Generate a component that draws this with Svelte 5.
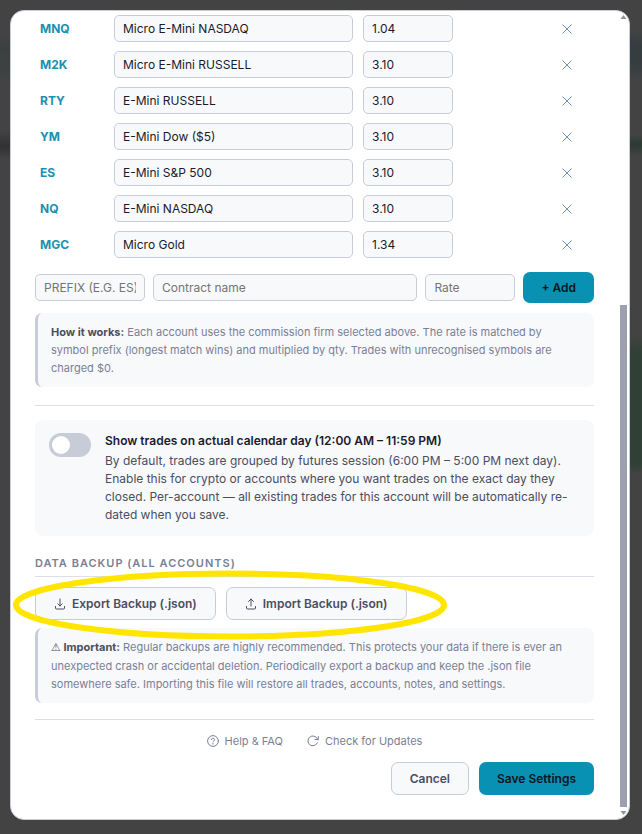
<script lang="ts">
	interface Rate {
		prefix: string;
		name: string;
		rate: string;
	}

	let rates = $state<Rate[]>([
		{ prefix: "MNQ", name: "Micro E-Mini NASDAQ", rate: "1.04" },
		{ prefix: "M2K", name: "Micro E-Mini RUSSELL", rate: "3.10" },
		{ prefix: "RTY", name: "E-Mini RUSSELL", rate: "3.10" },
		{ prefix: "YM", name: "E-Mini Dow ($5)", rate: "3.10" },
		{ prefix: "ES", name: "E-Mini S&P 500", rate: "3.10" },
		{ prefix: "NQ", name: "E-Mini NASDAQ", rate: "3.10" },
		{ prefix: "MGC", name: "Micro Gold", rate: "1.34" },
	]);

	let newPrefix = $state("");
	let newName = $state("");
	let newRate = $state("");
	let calendarDay = $state(false);

	function addRate() {
		const prefix = newPrefix.trim().toUpperCase();
		if (!prefix) return;
		rates.push({ prefix, name: newName, rate: newRate });
		newPrefix = newName = newRate = "";
	}

	function removeRate(index: number) {
		rates.splice(index, 1);
	}
</script>

<div class="overlay">
	<div class="modal" role="dialog" aria-label="Settings">
		<div class="modal-body">
			<table class="rates">
				<colgroup>
					<col class="col-prefix" />
					<col />
					<col class="col-rate" />
					<col class="col-remove" />
				</colgroup>
				<tbody>
					{#each rates as row, i}
						<tr>
							<th scope="row">{row.prefix}</th>
							<td><input class="field" aria-label="{row.prefix} contract name" bind:value={row.name} /></td>
							<td><input class="field rate" aria-label="{row.prefix} rate" bind:value={row.rate} /></td>
							<td class="remove-cell">
								<button class="remove" aria-label="Remove {row.prefix}" onclick={() => removeRate(i)}>
									<svg width="12" height="12" viewBox="0 0 12 12"><path d="M1.5 1.5l9 9M10.5 1.5l-9 9" /></svg>
								</button>
							</td>
						</tr>
					{/each}
				</tbody>
			</table>

			<div class="add-row">
				<input class="field prefix" placeholder="PREFIX (E.G. ES)" aria-label="Prefix" bind:value={newPrefix} />
				<input class="field name" placeholder="Contract name" aria-label="Contract name" bind:value={newName} />
				<input class="field rate" placeholder="Rate" aria-label="Rate" bind:value={newRate} />
				<button class="btn primary add" onclick={addRate}>+ Add</button>
			</div>

			<p class="hint">
				<strong>How it works:</strong> Each account uses the commission firm selected above. The rate is matched by
				symbol prefix (longest match wins) and multiplied by qty. Trades with unrecognised symbols are charged $0.
			</p>

			<hr />

			<div class="toggle-card">
				<input type="checkbox" class="switch" id="calendar-day" bind:checked={calendarDay} />
				<div>
					<label for="calendar-day">Show trades on actual calendar day (12:00 AM – 11:59 PM)</label>
					<p>
						By default, trades are grouped by futures session (6:00 PM – 5:00 PM next day). Enable this for crypto
						or accounts where you want trades on the exact day they closed. Per-account — all existing trades for
						this account will be automatically re-dated when you save.
					</p>
				</div>
			</div>

			<h3>Data Backup (All Accounts)</h3>

			<div class="backup">
				<button class="btn">
					<svg class="icon" width="12" height="12" viewBox="0 0 12 12">
						<path d="M6 1v7M3.8 5.8L6 8l2.200-2.200M1.500 8.500v1.500a1 1 0 0 0 1 1h7a1 1 0 0 0 1-1V8.500" />
					</svg>
					Export Backup (.json)
				</button>
				<button class="btn">
					<svg class="icon" width="12" height="12" viewBox="0 0 12 12">
						<path d="M6 8V1M3.500 3.500L6 1l2.500 2.500M1.500 8.500v1.500a1 1 0 0 0 1 1h7a1 1 0 0 0 1-1V8.500" />
					</svg>
					Import Backup (.json)
				</button>
				<svg class="marker" width="436" height="70" viewBox="0 0 436 70" aria-hidden="true">
					<ellipse cx="218" cy="35" rx="214" ry="31.500" />
				</svg>
			</div>

			<p class="hint important">
				<strong><span class="warn">⚠</span> Important:</strong> Regular backups are highly recommended. This protects
				your data if there is ever an unexpected crash or accidental deletion. Periodically export a backup and keep
				the .json file somewhere safe. Importing this file will restore all trades, accounts, notes, and settings.
			</p>

			<hr />

			<nav class="links">
				<a href="#help">
					<svg class="icon" width="12" height="12" viewBox="0 0 12 12">
						<circle cx="6" cy="6" r="5.400" />
						<path d="M4.500 4.700a1.500 1.500 0 1 1 2.200 1.300c-.5.3-.7.5-.7 1M6 8.400v.6" />
					</svg>
					Help &amp; FAQ
				</a>
				<a href="#updates">
					<svg class="icon" width="12" height="12" viewBox="0 0 12 12">
						<path d="M10.400 7.800A4.900 4.900 0 1 1 10.300 3.800L11.300 4.600M11.300 1.300v3.300H8" />
					</svg>
					Check for Updates
				</a>
			</nav>

			<div class="actions">
				<button class="btn">Cancel</button>
				<button class="btn primary">Save Settings</button>
			</div>
		</div>

		<div class="scrollbar" aria-hidden="true">
			<svg width="7" height="4" viewBox="0 0 7 4"><path d="M3.500 0L6.500 4H.5z" /></svg>
			<div class="track"><div class="thumb"></div></div>
			<svg width="7" height="4" viewBox="0 0 7 4"><path d="M3.500 4L.5 0h6z" /></svg>
		</div>
	</div>
</div>

<style>
	:global(body) {
		margin: 0;
		background: #434343;
	}

	.overlay {
		box-sizing: border-box;
		min-height: 100vh;
		padding: 10px 12px 14px 10px;
		font-family: Inter, sans-serif;
		font-size: 12px;
		background:
			linear-gradient(#434343 30px, #363d40 45px, #363d40 62px, #434343 80px, #434343 135px, #2b3a33 144px, #434343 156px, #434343 335px, #314036 352px, #314036 464px, #434343 474px) right / 12px 100% no-repeat,
			linear-gradient(#434343 35px, #3a4040 50px, #434343 85px, #434343 130px, #323232 146px, #434343 160px) left / 10px 100% no-repeat,
			#434343;
	}

	.modal {
		display: flex;
		overflow: hidden;
		background: #fff;
		border: 1px solid #c8ccd8;
		border-radius: 14px;
	}

	.modal-body {
		flex: 1;
		min-width: 0;
		padding: 0 24px 24px;
	}

	.rates {
		width: 100%;
		table-layout: fixed;
		border-collapse: collapse;
	}

	.col-prefix {
		width: 74px;
	}

	.col-rate {
		width: 182px;
	}

	.col-remove {
		width: 54px;
	}

	th,
	td {
		box-sizing: border-box;
		height: 36px;
		padding: 0 5px 1px;
		text-align: left;
	}

	th {
		color: #1e8fb0;
		font-weight: 700;
	}

	td {
		line-height: 0;
	}

	.remove-cell {
		padding-bottom: 0;
	}

	.field {
		box-sizing: border-box;
		width: 100%;
		height: 27px;
		padding: 0 8px;
		font: inherit;
		line-height: 16px;
		color: #1a1a2e;
		background: #f8f9fb;
		border: 1px solid #c8ccd8;
		border-radius: 5px;
	}

	.field::placeholder {
		color: #757575;
	}

	.field.rate {
		width: 90px;
	}

	.field.prefix {
		width: 110px;
		text-transform: uppercase;
	}

	.field.name {
		flex: 1;
		width: auto;
		min-width: 0;
	}

	.remove {
		display: block;
		margin: 0 auto;
		padding: 0;
		background: none;
		border: 0;
		cursor: pointer;
	}

	.remove svg {
		display: block;
		fill: none;
		stroke: #6f93bd;
	}

	.add-row {
		display: flex;
		align-items: center;
		gap: 8px;
		margin-top: 9px;
	}

	.btn {
		display: inline-flex;
		align-items: center;
		gap: 6px;
		box-sizing: border-box;
		height: 33px;
		padding: 0 18px;
		font: inherit;
		font-weight: 600;
		color: #4a4e5e;
		background: #f8f9fb;
		border: 1px solid #c8ccd8;
		border-radius: 7px;
		cursor: pointer;
	}

	.btn.primary {
		color: #0d1420;
		background: #0891b2;
		border: 0;
	}

	.btn.add {
		height: 31px;
	}

	.icon {
		flex-shrink: 0;
		fill: none;
		stroke: currentColor;
		stroke-linecap: round;
		stroke-linejoin: round;
	}

	.hint {
		margin: 10px 0 0;
		padding: 10px 14px 10px 13px;
		font-size: 11px;
		line-height: 18px;
		color: #7a7f96;
		background: #f8f9fb;
		border-left: 3px solid #c8ccd8;
		border-radius: 7px;
	}

	.hint.important {
		margin-top: 8px;
	}

	.hint strong {
		color: #4a4e5e;
		font-weight: 700;
	}

	.warn {
		font-family: "DejaVu Sans", sans-serif;
	}

	hr {
		height: 1px;
		margin: 18px 0 14px;
		background: #dcdfe8;
		border: 0;
	}

	.toggle-card {
		display: flex;
		align-items: flex-start;
		gap: 14px;
		padding: 12px 14px;
		background: #f8f9fb;
		border-radius: 8px;
	}

	.toggle-card label {
		display: block;
		line-height: 18px;
		font-weight: 600;
		color: #1a1a2e;
	}

	.toggle-card p {
		margin: 2px 0 0;
		line-height: 18px;
		color: #4a4e5e;
	}

	.switch {
		flex-shrink: 0;
		display: flex;
		box-sizing: border-box;
		width: 42px;
		height: 24px;
		margin: 1px 0 0;
		padding: 3px;
		appearance: none;
		background: #c8ccd8;
		border-radius: 12px;
		cursor: pointer;
	}

	.switch::before {
		content: "";
		width: 18px;
		height: 18px;
		background: #fff;
		border-radius: 50%;
	}

	.switch:checked {
		justify-content: flex-end;
		background: #0891b2;
	}

	h3 {
		margin: 20px 0 10px;
		padding-bottom: 6px;
		font-size: 11px;
		line-height: 14px;
		font-weight: 600;
		letter-spacing: 1px;
		text-transform: uppercase;
		color: #7a7f96;
		border-bottom: 1px solid #dcdfe8;
	}

	.backup {
		position: relative;
		display: flex;
		gap: 10px;
	}

	/* highlight ring drawn over the backup buttons */
	.marker {
		position: absolute;
		top: -17px;
		left: -23px;
		fill: none;
		stroke: #ffe500;
		stroke-width: 6px;
		pointer-events: none;
	}

	.important + hr {
		margin-top: 16px;
	}

	.links {
		display: flex;
		justify-content: center;
		gap: 24px;
		font-size: 11px;
		line-height: 14px;
	}

	.links a {
		display: flex;
		align-items: center;
		gap: 6px;
		color: #7a7f96;
		text-decoration: none;
	}

	.actions {
		display: flex;
		justify-content: flex-end;
		gap: 10px;
		margin-top: 14px;
	}

	.scrollbar {
		display: flex;
		flex-direction: column;
		align-items: center;
		gap: 4px;
		width: 11px;
		padding: 4px 0;
	}

	.scrollbar svg {
		flex-shrink: 0;
		fill: #8f939f;
	}

	.track {
		flex: 1;
		display: flex;
		align-items: flex-end;
	}

	.thumb {
		width: 7px;
		height: 64%;
		background: #9ca0ae;
	}
</style>
